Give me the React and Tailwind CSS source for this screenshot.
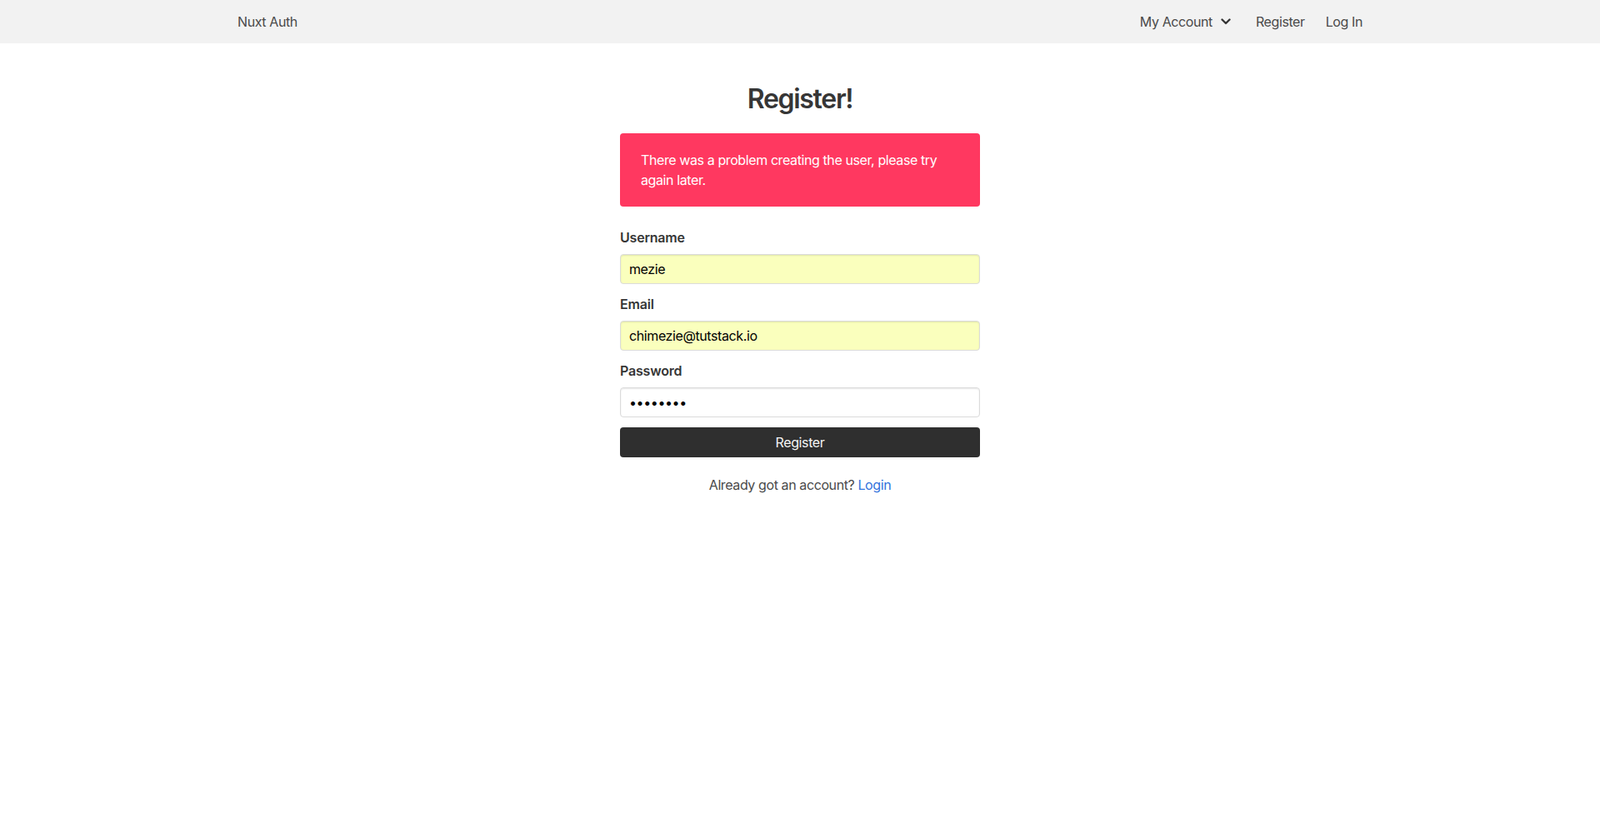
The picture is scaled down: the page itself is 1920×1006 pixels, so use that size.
export default function App() {
  const font = { fontFamily: 'Inter, "Noto Sans", "Liberation Sans", sans-serif' };
  return (
    <div className="min-h-screen bg-white tracking-[-0.4px] text-[#363636]" style={font}>
      <nav className="h-[52px] bg-[#f2f2f2]">
        <div className="mx-auto flex h-full w-[1350px] items-center justify-between text-[16px] text-[#4a4a4a]">
          <a className="leading-6">Nuxt Auth</a>
          <div className="flex items-center">
            <a className="flex items-center leading-6">
              My Account
              <svg className="ml-[10px]" width="12" height="8" viewBox="0 0 12 8" fill="none">
                <path d="M1.5 1.5 L6 6 L10.5 1.5" stroke="#363636" strokeWidth="2.4" strokeLinecap="round" strokeLinejoin="round" />
              </svg>
            </a>
            <a className="ml-[30px] leading-6">Register</a>
            <a className="ml-[25px] leading-6">Log In</a>
          </div>
        </div>
      </nav>
      <section className="pt-[49px]">
        <div className="mx-auto w-[432px]">
          <h2 className="text-center text-[32px] font-semibold leading-9 tracking-[-1.3px] text-[#363636]">Register!</h2>
          <div className="mt-[23px] rounded-[4px] bg-[#ff3860] py-5 pl-[25px] pr-10 text-[16px] leading-6 text-white">
            There was a problem creating the user, please try again later.
          </div>
          <form className="mt-[25px]" onSubmit={(e) => e.preventDefault()}>
            <div>
              <label className="block text-[16px] font-semibold leading-6 tracking-[-0.2px] text-[#363636]">Username</label>
              <input
                readOnly
                value="mezie"
                className="mt-[8px] block h-9 w-full rounded-[4px] border border-[#dbdbdb] bg-[#faffbd] px-[10px] text-[16px] tracking-[-0.4px] text-black shadow-[inset_0_1px_2px_rgba(10,10,10,0.1)] outline-none"
              />
            </div>
            <div className="mt-[12px]">
              <label className="block text-[16px] font-semibold leading-6 tracking-[-0.2px] text-[#363636]">Email</label>
              <input
                readOnly
                value="chimezie@tutstack.io"
                className="mt-[8px] block h-9 w-full rounded-[4px] border border-[#dbdbdb] bg-[#faffbd] px-[10px] text-[16px] tracking-[-0.4px] text-black shadow-[inset_0_1px_2px_rgba(10,10,10,0.1)] outline-none"
              />
            </div>
            <div className="mt-[12px]">
              <label className="block text-[16px] font-semibold leading-6 tracking-[-0.2px] text-[#363636]">Password</label>
              <input
                readOnly
                type="password"
                value="secret12"
                className="mt-[8px] block h-9 w-full rounded-[4px] border border-[#dbdbdb] bg-white px-[10px] text-[16px] tracking-[-0.4px] text-black shadow-[inset_0_1px_2px_rgba(10,10,10,0.1)] outline-none"
              />
            </div>
            <button
              type="submit"
              className="mt-3 block h-9 w-full rounded-[4px] bg-[#2f2f2f] text-[16px] tracking-[-0.4px] text-[#f5f5f5]"
            >
              Register
            </button>
          </form>
          <p className="mt-[21px] text-center text-[16px] leading-6 text-[#4a4a4a]">
            Already got an account? <a className="text-[#3273dc]">Login</a>
          </p>
        </div>
      </section>
    </div>
  );
}
